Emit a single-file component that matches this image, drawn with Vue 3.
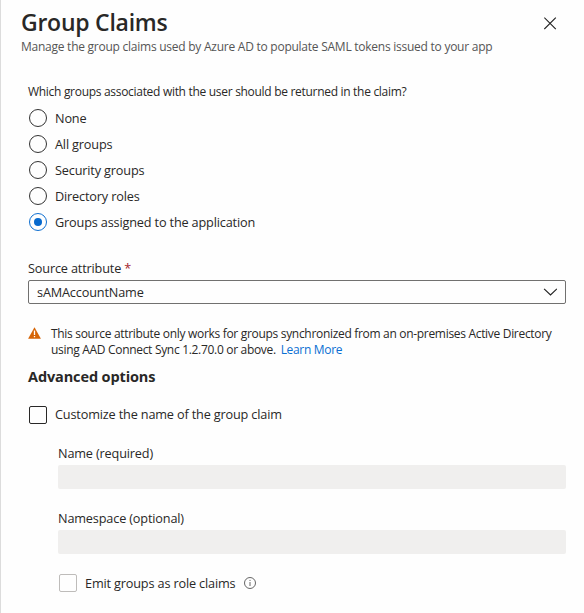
<script setup>
import { ref } from 'vue'

const groups = ['None', 'All groups', 'Security groups', 'Directory roles', 'Groups assigned to the application']
const selected = ref('Groups assigned to the application')
</script>

<template>
  <main class="panel">
    <header class="header">
      <div class="title-row">
        <h1 class="title">Group Claims</h1>
        <button class="close" aria-label="Close">
          <svg width="13" height="13" viewBox="0 0 13 13"><path d="M.3.6 11.8 12.1M11.8.6.3 12.1" /></svg>
        </button>
      </div>
      <p class="subtitle">Manage the group claims used by Azure AD to populate SAML tokens issued to your app</p>
    </header>

    <section class="content">
      <p class="question">Which groups associated with the user should be returned in the claim?</p>
      <div class="radios" role="radiogroup">
        <div
          v-for="g in groups"
          :key="g"
          class="option"
          role="radio"
          :aria-checked="selected === g"
          @click="selected = g"
        >
          <i class="circle" :class="{ on: selected === g }"></i>
          <span>{{ g }}</span>
        </div>
      </div>

      <div class="label source">Source attribute <b class="star">*</b></div>
      <div class="select">
        <span>sAMAccountName</span>
        <svg width="14" height="8" viewBox="0 0 14 8"><path d="M1.1.8 7.5 7 13.9.8" /></svg>
      </div>

      <div class="notice">
        <svg class="warn" width="13" height="12" viewBox="0 0 13 12">
          <path class="tri" d="M6.5.3 12.9 11.7H.1Z" />
          <path class="bang" d="M6.5 3.6V8M6.5 8.9v1.4" />
        </svg>
        <p class="notice-text">
          This source attribute only works for groups synchronized from an on-premises Active Directory<br />
          using AAD Connect Sync 1.2.70.0 or above. <a class="link">Learn More</a>
        </p>
      </div>

      <h2 class="advanced">Advanced options</h2>
      <div class="check">
        <i class="box"></i>
        <span class="check-text">Customize the name of the group claim</span>
      </div>

      <div class="nested">
        <div class="label">Name (required)</div>
        <div class="input"></div>
        <div class="label second">Namespace (optional)</div>
        <div class="input"></div>
        <div class="check emit">
          <i class="box off"></i>
          <span class="check-text">Emit groups as role claims</span>
          <svg class="info" width="12" height="12" viewBox="0 0 12 12">
            <circle cx="6" cy="6" r="5.5" />
            <path d="M6 5v4M6 2.9v1.1" />
          </svg>
        </div>
      </div>
    </section>
  </main>
</template>

<style>
body {
  margin: 0;
  background: #fff;
}
</style>

<style scoped>
.panel {
  box-sizing: border-box;
  width: 584px;
  height: 613px;
  overflow: hidden;
  border-left: 1px solid #dcdcdc;
  background: #fefefe;
  color: #292827;
  font: 12.7px/16px "Open Sans", "Noto Sans", sans-serif;
  letter-spacing: -0.16px;
}
h1, h2, p {
  margin: 0;
}
.header {
  padding: 8px 27px 0 20px;
}
.title-row {
  display: flex;
  align-items: center;
  justify-content: space-between;
  height: 30px;
}
.title {
  padding-bottom: 2px;
  font-size: 23px;
  line-height: 30px;
  font-weight: 600;
  letter-spacing: -0.25px;
}
.close {
  display: flex;
  padding: 0;
  border: 0;
  background: none;
}
.close path,
.select path {
  fill: none;
  stroke: #222;
  stroke-width: 1.15;
}
.subtitle {
  padding-top: 1px;
  color: #555;
  font-size: 12px;
  letter-spacing: -0.25px;
}
.content {
  padding: 29px 18px 0 27px;
}
.question {
  font-size: 12px;
  letter-spacing: -0.3px;
}
.radios {
  padding-top: 5px;
}
.option,
.check {
  display: flex;
  align-items: center;
  height: 26px;
  padding-left: 1px;
  gap: 8px;
}
.circle {
  box-sizing: border-box;
  width: 18px;
  height: 18px;
  border: 1px solid #333;
  border-radius: 50%;
}
.circle.on {
  display: grid;
  place-items: center;
  border-color: #0f6fd0;
}
.circle.on::after {
  content: "";
  width: 8px;
  height: 8px;
  border-radius: 50%;
  background: #0669ce;
}
.label {
  padding-bottom: 4px;
}
.source {
  margin-top: 25px;
}
.star {
  color: #a4262c;
  font-weight: 400;
}
.select {
  box-sizing: border-box;
  display: flex;
  align-items: center;
  justify-content: space-between;
  height: 24px;
  padding: 0 8px;
  border: 1px solid #71706f;
  border-radius: 2px;
}
.notice {
  display: flex;
  gap: 10px;
  margin-top: 21px;
  font-size: 12px;
  letter-spacing: -0.31px;
}
.warn {
  flex: none;
  margin-top: 2px;
}
.tri {
  fill: #d66507;
}
.bang {
  stroke: #fff;
  stroke-width: 1.3;
}
.notice-text {
  padding-top: 1px;
  white-space: nowrap;
}
.link {
  margin-left: 2px;
  color: #0a6fd2;
}
.advanced {
  margin-top: 8px;
  font-size: 14.5px;
  line-height: 22px;
  font-weight: 700;
  letter-spacing: -0.12px;
}
.check {
  margin-top: 14px;
}
.check-text {
  padding-bottom: 2px;
}
.box {
  box-sizing: border-box;
  width: 18px;
  height: 18px;
  border: 1px solid #292827;
  border-radius: 2px;
}
.box.off {
  border-color: #bebcba;
}
.nested {
  padding: 17px 0 0 30px;
}
.input {
  height: 24px;
  border-radius: 2px;
  background: #f0efee;
}
.second {
  margin-top: 21px;
}
.emit {
  margin-top: 16px;
}
.emit .check-text {
  padding-bottom: 1px;
}
.info {
  margin: 0 0 1px 1px;
  fill: none;
  stroke: #555;
  stroke-width: 0.9;
}
</style>
